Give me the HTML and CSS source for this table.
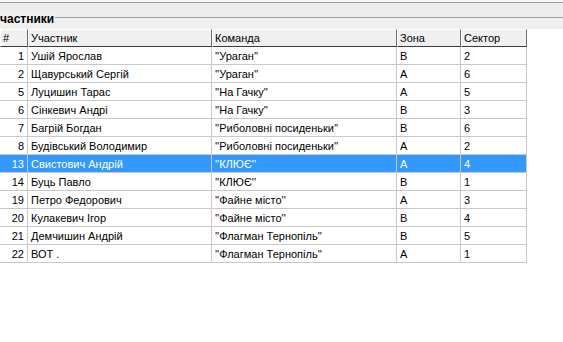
FILE: index.html
```html
<!DOCTYPE html>
<html>
<head>
<meta charset="utf-8">
<link rel="stylesheet" href="styles.css">
</head>
<body>
<div class="app">
  <div class="topline"></div>
  <div class="band"></div>
  <div class="group">
    <span class="caption">частники</span>
  </div>
  <div class="grid">
    <table class="tbl">
      <colgroup>
        <col class="c-num"><col class="c-name"><col class="c-team"><col class="c-zone"><col class="c-sector">
      </colgroup>
      <thead>
        <tr><th>#</th><th>Участник</th><th>Команда</th><th>Зона</th><th>Сектор</th></tr>
      </thead>
      <tbody>
        <tr><td class="num">1</td><td>Ушій Ярослав</td><td>''Ураган''</td><td>B</td><td>2</td></tr>
        <tr><td class="num">2</td><td>Щавурський Сергій</td><td>''Ураган''</td><td>A</td><td>6</td></tr>
        <tr><td class="num">5</td><td>Луцишин Тарас</td><td>''На Гачку''</td><td>A</td><td>5</td></tr>
        <tr><td class="num">6</td><td>Сінкевич Андрі</td><td>''На Гачку''</td><td>B</td><td>3</td></tr>
        <tr><td class="num">7</td><td>Багрій Богдан</td><td>''Риболовні посиденьки''</td><td>B</td><td>6</td></tr>
        <tr><td class="num">8</td><td>Будівський Володимир</td><td>''Риболовні посиденьки''</td><td>A</td><td>2</td></tr>
        <tr class="sel"><td class="num">13</td><td>Свистович Андрій</td><td>''КЛЮЄ''</td><td>A</td><td>4</td></tr>
        <tr><td class="num">14</td><td>Буць Павло</td><td>''КЛЮЄ''</td><td>B</td><td>1</td></tr>
        <tr><td class="num">19</td><td>Петро Федорович</td><td>''Файне місто''</td><td>A</td><td>3</td></tr>
        <tr><td class="num">20</td><td>Кулакевич Ігор</td><td>''Файне місто''</td><td>B</td><td>4</td></tr>
        <tr><td class="num">21</td><td>Демчишин Андрій</td><td>''Флагман Тернопіль''</td><td>B</td><td>5</td></tr>
        <tr><td class="num">22</td><td>ВОТ .</td><td>''Флагман Тернопіль''</td><td>A</td><td>1</td></tr>
      </tbody>
    </table>
  </div>
</div>
</body>
</html>
```
FILE: styles.css
```css
html, body {
  margin: 0;
  padding: 0;
  background: #ffffff;
}
.app {
  width: 563px;
  height: 342px;
  display: flex;
  flex-direction: column;
  font-family: "Liberation Sans", Arial, sans-serif;
  font-size: 11px;
  color: #000;
  overflow: hidden;
}
.topline {
  height: 2px;
  background: #f7f7f7;
  border-bottom: 1px solid #a0a0a0;
}
.band {
  height: 14px;
  background: #ececec;
}
.group {
  position: relative;
  height: 11px;
  background: #f0f0f0;
  border-top: 1px solid #a0a0a0;
}
.caption {
  position: absolute;
  left: 0;
  top: -5px;
  background: #f0f0f0;
  font-weight: bold;
  font-size: 12px;
  line-height: 13px;
  padding-right: 1px;
}
.grid {
  flex: 1;
  background: #ffffff;
}
.tbl {
  table-layout: fixed;
  border-collapse: separate;
  border-spacing: 0;
  width: 527px;
}
.c-num { width: 28px; }
.c-name { width: 184px; }
.c-team { width: 185px; }
.c-zone { width: 64px; }
.c-sector { width: 66px; }
.tbl th {
  box-sizing: border-box;
  height: 18px;
  padding: 0 2px;
  text-align: left;
  font-weight: normal;
  background: #f0f0f0;
  border-top: 1px solid #ffffff;
  border-left: 1px solid #ffffff;
  border-right: 1px solid #6e6e6e;
  border-bottom: 1px solid #3c3c3c;
  white-space: nowrap;
  overflow: hidden;
}
.tbl td {
  box-sizing: border-box;
  height: 18px;
  padding: 0 3px;
  border-right: 1px solid #c8c8c8;
  border-bottom: 1px solid #c8c8c8;
  white-space: nowrap;
  overflow: hidden;
}
.tbl td.num {
  text-align: right;
  padding: 0 3px 0 0;
}
.tbl tr.sel td {
  background: #3399ff;
  color: #ffffff;
}
```
